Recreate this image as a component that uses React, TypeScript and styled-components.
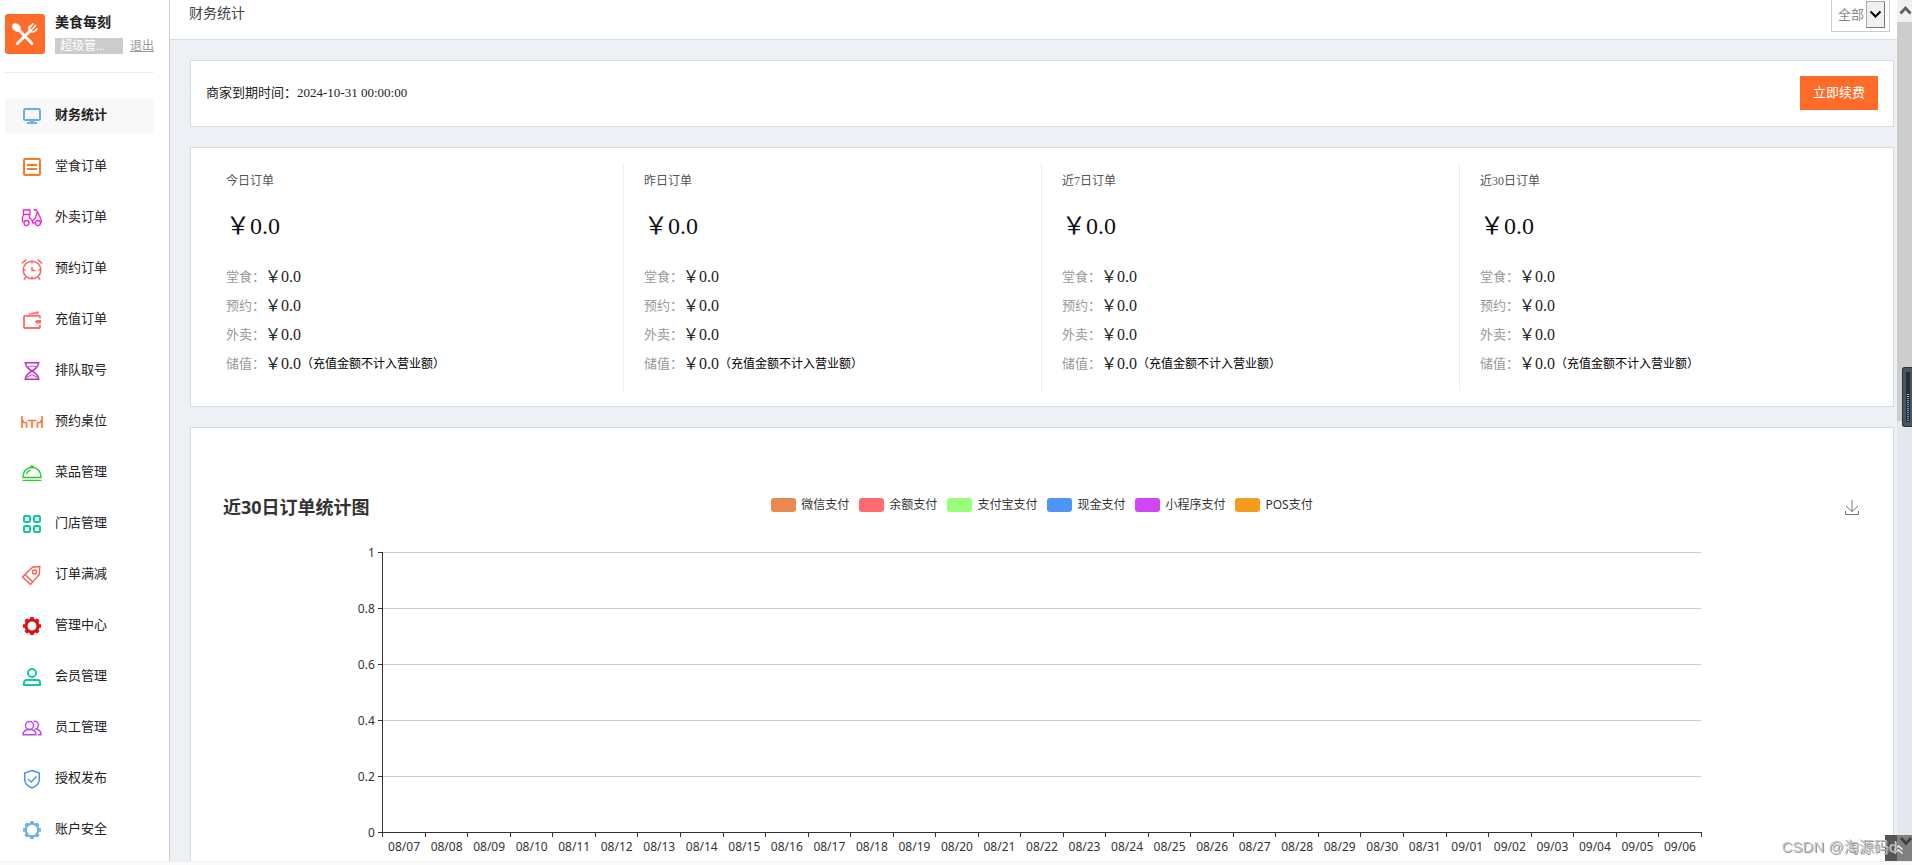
import React from "react";
import styled, { createGlobalStyle, css } from "styled-components";

const GlobalStyle = createGlobalStyle`
  *, *::before, *::after { box-sizing: border-box; }
  html, body { margin: 0; padding: 0; }
  body {
    font-family: "Liberation Serif", "Noto Sans CJK SC", serif;
    font-size: 13px;
    line-height: 20px;
    color: #222;
    overflow: hidden;
  }
  h1, h2, h3, p, ul, dl, dd, dt { margin: 0; padding: 0; font-weight: normal; }
  ul { list-style: none; }
`;

/* ---------- page frame ---------- */

const Page = styled.div`
  display: flex;
  flex-direction: column;
  height: 100vh;
  background: #fff;
`;

const Shell = styled.div`
  display: flex;
  flex: 1;
  min-height: 0;
`;

const BottomStrip = styled.div`
  height: 4px;
  background: #fafafa;
  border-top: 1px solid #eee;
`;

/* ---------- sidebar ---------- */

const Sidebar = styled.aside`
  flex: none;
  width: 170px;
  padding: 14px 15px 0 5px;
  border-right: 1px solid #ccc;
  background: #fff;
  overflow: hidden;
`;

const Brand = styled.div`
  display: flex;
  gap: 10px;
  height: 59px;
  border-bottom: 1px solid #eee;
`;

const Logo = styled.svg`
  flex: none;
  width: 40px;
  height: 40px;
`;

const BrandInfo = styled.div`
  flex: 1;
`;

const BrandName = styled.h1`
  font-size: 14px;
  line-height: 18px;
  font-weight: bold;
  height: 24px;
`;

const Account = styled.div`
  display: flex;
  justify-content: space-between;
  font-size: 12px;
  line-height: 16px;
`;

const Role = styled.span`
  width: 68px;
  height: 16px;
  padding-left: 5px;
  background: #ccc;
  color: #fff;
`;

const Logout = styled.a`
  color: #999;
  text-decoration: underline;
`;

const Menu = styled.ul`
  display: flex;
  flex-direction: column;
  gap: 15px;
  padding-top: 25px;
`;

const MenuLink = styled.a<{ $active?: boolean }>`
  display: flex;
  align-items: center;
  gap: 12px;
  height: 36px;
  padding-left: 16px;
  border-radius: 2px;
  color: #222;
  text-decoration: none;
  ${(p) => p.$active && css`
    background: #f8f8f8;
    font-weight: bold;
  `}
`;

const MenuLabel = styled.span`
  padding-bottom: 2px;
`;

const MenuIcon = styled.svg`
  flex: none;
  width: 22px;
  height: 22px;
  fill: none;
`;

/* ---------- content ---------- */

const Content = styled.div`
  flex: 1;
  min-width: 0;
  overflow: hidden;
  background: #edf1f6;
`;

const TopBar = styled.header`
  display: flex;
  justify-content: space-between;
  height: 40px;
  padding: 0 7px 0 19px;
  background: #fff;
  border-bottom: 1px solid #ddd;
`;

const PageTitle = styled.h2`
  font-size: 14px;
  line-height: 27px;
  color: #444;
`;

const StoreFilter = styled.label`
  display: flex;
  position: relative;
  align-items: flex-start;
  height: 32px;
  padding: 1px 4px 0 6px;
  border: 1px solid #ccc;
  border-top: none;
`;

const StoreSelect = styled.select`
  appearance: none;
  width: 47px;
  height: 27px;
  padding: 0;
  border: none;
  background: none;
  font-family: inherit;
  font-size: 13px;
  color: #888;
`;

const SelectArrow = styled.svg`
  position: absolute;
  top: 1px;
  right: 4px;
  width: 19px;
  height: 27px;
  background: #f0f0f0;
  border: 1px solid #777;
  border-top-color: #aaa;
  border-left-color: #aaa;
  pointer-events: none;
`;

const Cards = styled.main`
  display: flex;
  flex-direction: column;
  gap: 20px;
  padding: 20px 3px 20px 20px;
`;

const Card = styled.section`
  background: #fff;
  border: 1px solid #dadbde;
`;

const ExpiryCard = styled(Card)`
  display: flex;
  align-items: center;
  justify-content: space-between;
  height: 67px;
  padding: 0 15px 2px;
`;

const RenewButton = styled.button`
  width: 78px;
  height: 34px;
  padding: 0 0 2px;
  border: none;
  background: #ff6c2a;
  color: #fff;
  font-family: inherit;
  font-size: 13px;
`;

const StatsCard = styled(Card)`
  display: grid;
  grid-template-columns: repeat(4, 1fr);
  padding: 15px;
`;

const StatColumn = styled.div`
  height: 228px;
  padding: 8px 0 0 20px;
  border-right: 1px solid #eee;
  &:last-child { border-right: none; }
`;

const StatTitle = styled.h3`
  font-size: 12px;
  line-height: 21px;
  color: #555;
`;

const StatTotal = styled.p`
  padding: 20px 0 22px;
  font-size: 24px;
  line-height: 28px;
  color: #111;
`;

const StatRow = styled.div`
  display: flex;
  align-items: center;
  height: 29px;
`;

const StatLabel = styled.dt`
  color: #999;
`;

const StatValue = styled.dd`
  font-size: 16px;
`;

const StatNote = styled.dd`
  font-size: 12px;
  color: #000;
`;

/* ---------- chart ---------- */

const ChartCard = styled(Card)`
  padding: 62px 27px 40px;
  font-family: "Noto Sans", "Noto Sans CJK SC", sans-serif;
`;

const ChartHead = styled.div`
  display: grid;
  grid-template-columns: 1fr auto 1fr;
  align-items: center;
  height: 34px;
`;

const ChartTitle = styled.h3`
  padding-left: 5px;
  font-size: 18px;
  line-height: 34px;
  font-weight: bold;
  color: #333;
`;

const Legend = styled.ul`
  display: flex;
  gap: 10px;
  padding-bottom: 4px;
  font-size: 12px;
  line-height: 20px;
  color: #333;
`;

const LegendItem = styled.li`
  display: flex;
  align-items: center;
  gap: 5px;
`;

const Swatch = styled.span<{ $color: string }>`
  width: 25px;
  height: 14px;
  border-radius: 3px;
  background: ${(p) => p.$color};
`;

const SaveButton = styled.button`
  justify-self: end;
  display: flex;
  padding: 2px 6px 0 0;
  border: none;
  background: none;
`;

const Plot = styled.svg`
  display: block;
  width: 100%;
  height: 340px;
  font-size: 12px;
  text { fill: #333; }
  line { shape-rendering: crispEdges; }
`;

/* ---------- scroll bar and overlays ---------- */

const ScrollTrack = styled.div`
  flex: none;
  width: 15px;
  background: #e5e7ec;
`;

const ScrollArrow = styled.svg`
  display: block;
  width: 15px;
  height: 22px;
  background: #f0f0f0;
`;

const ScrollThumb = styled.div`
  height: 399px;
  background: #cdcdcd;
`;

const Meter = styled.div`
  position: fixed;
  right: 0;
  top: 367px;
  width: 10px;
  height: 60px;
  padding: 4px 3px;
  border: 1px solid #2c3238;
  border-right: none;
  border-radius: 3px 0 0 3px;
  background: #4a555e;
`;

const MeterBars = styled.svg`
  display: block;
  width: 4px;
  height: 50px;
  background: #272c38;
`;

const BackToTop = styled.button`
  position: fixed;
  right: 0;
  bottom: 4px;
  width: 27px;
  height: 26px;
  padding: 0;
  border: none;
  background: linear-gradient(to right, #555 12px, #808080 12px);
`;

const Watermark = styled.span`
  position: fixed;
  right: 15px;
  bottom: 8px;
  font-family: "Liberation Sans", "Noto Sans CJK SC", sans-serif;
  font-size: 15px;
  line-height: 20px;
  color: #c4c4c4;
  text-shadow: 1px 1px 0 #999;
`;

/* ---------- icons ---------- */

const GEAR_TEETH = [0, 45, 90, 135, 180, 225, 270, 315];

const Gear = ({ color, heavy }: { color: string; heavy?: boolean }) => (
  <MenuIcon viewBox="0 0 22 22">
    <circle cx="11" cy="11" r={heavy ? 6 : 6.3} stroke={color} strokeWidth={heavy ? 3 : 2.2} />
    {GEAR_TEETH.map((a) => (
      <rect key={a} x="9.2" y="2" width="3.6" height="3" rx=".6" fill={color} transform={`rotate(${a} 11 11)`} />
    ))}
  </MenuIcon>
);

const icons: Record<string, React.ReactNode> = {
  monitor: (
    <MenuIcon viewBox="0 0 22 22">
      <rect x="3" y="4" width="16" height="11" rx="1" stroke="#69b0ec" strokeWidth="2" />
      <path d="M9 15h4v2h3v2H6v-2h3z" fill="#69b0ec" />
    </MenuIcon>
  ),
  list: (
    <MenuIcon viewBox="0 0 22 22">
      <rect x="3" y="3" width="16" height="16" rx="1" stroke="#ff7a23" strokeWidth="2" />
      <path d="M6 9h10M6 13h10" stroke="#ff7a23" strokeWidth="2" />
    </MenuIcon>
  ),
  scooter: (
    <MenuIcon viewBox="0 0 22 22" stroke="#ee22dd" strokeWidth="1.3">
      <path d="M2.500 3h6.500v4.500H2.500zM2.500 8c-1.300 2-1.500 5-.5 7.500M8.500 8v3c2 1 3 2.500 3.300 5h2M12.500 3h2.800l1 2-1.800 6-3 3M16.500 4.500l3.500 8c.8 2 .4 3-.8 4" />
      <circle cx="5.500" cy="16" r="2.500" />
      <circle cx="17" cy="16" r="2.500" />
    </MenuIcon>
  ),
  alarm: (
    <MenuIcon viewBox="0 0 22 22" stroke="#fb6160" strokeWidth="1.500">
      <circle cx="11" cy="12" r="8.800" />
      <path d="M.800 5.500 5.500 1.500M21.200 5.500 16.500 1.500M11 9v3.500h3.500M11 3.500v2M11 18.500v2M2.500 12h2M17.500 12h2M5 19l-2 2.500M17 19l2 2.500" />
    </MenuIcon>
  ),
  wallet: (
    <MenuIcon viewBox="0 0 22 22" stroke="#ff6a6a" strokeWidth="1.800">
      <path d="M19 9.500V7.800a1 1 0 0 0-1-1H4a1 1 0 0 0-1 1V18a1 1 0 0 0 1 1h14a1 1 0 0 0 1-1v-2" />
      <path d="M6.500 5.500 17 2.500v3z" fill="#ff6a6a" fillOpacity=".5" stroke="none" />
      <path d="M8 5.200 17 3v2.500" strokeWidth="1.200" />
      <path d="M20 11h-4.500l-1.500 1.800 1.500 1.800H20z" fill="#ff6a6a" stroke="none" />
    </MenuIcon>
  ),
  hourglass: (
    <MenuIcon viewBox="0 0 22 22" stroke="#c02fc4" strokeWidth="1.500">
      <path d="M3.500 2.800h15M3.500 19.200h15M4.500 3c0 4 3 6 6.500 8 3.500-2 6.500-4 6.500-8M4.500 19c0-4 3-6 6.500-8 3.500 2 6.500 4 6.500 8" />
      <path d="M7 6.500c2 1 3-1 4.500-.5s2 .8 3.500.3M6 17.500l5-3 5 3" strokeWidth="1" />
    </MenuIcon>
  ),
  table: (
    <MenuIcon viewBox="0 0 22 22" stroke="#f87a40" strokeWidth="1.700">
      <path d="M1 5v12M1 11.500h4.500V17M21 5v12M21 11.500h-4.500V17M6.500 9.500h9M11 9.500V17" />
      <path d="M2 9v3M20 9v3" />
    </MenuIcon>
  ),
  dish: (
    <MenuIcon viewBox="0 0 22 22" stroke="#22cc22" strokeWidth="1.300">
      <path d="M2 15.500C2 9 6 5.500 11 5.500s9 3.500 9 10zM1.500 18.300h19M9.500 5.300c0-2 3-2 3 0M5.500 12c.5-2 1.800-3.500 3.800-4.200" />
    </MenuIcon>
  ),
  grid: (
    <MenuIcon viewBox="0 0 22 22" stroke="#0fc99a" strokeWidth="2">
      <rect x="3" y="3" width="6" height="6" rx="1.300" />
      <rect x="13" y="3" width="6" height="6" rx="1.300" />
      <rect x="3" y="13" width="6" height="6" rx="1.300" />
      <rect x="13" y="13" width="6" height="6" rx="1.300" />
    </MenuIcon>
  ),
  tag: (
    <MenuIcon viewBox="0 0 22 22" stroke="#fb5f4c" strokeWidth="1.400">
      <path d="M1.500 13 11.500 3.200l7.300-.7-.5 8L9.500 20.500zM4.200 10.500l7.500 7.500" />
      <circle cx="13.500" cy="8" r="2" />
    </MenuIcon>
  ),
  gearRed: <Gear color="#e60a0a" heavy />,
  member: (
    <MenuIcon viewBox="0 0 22 22" stroke="#0fcb9b" strokeWidth="2">
      <circle cx="11" cy="7" r="4" />
      <path d="M3 19v-2.500a2.500 2.500 0 0 1 2.500-2.500h11a2.500 2.500 0 0 1 2.500 2.500V19z" />
    </MenuIcon>
  ),
  staff: (
    <MenuIcon viewBox="0 0 22 22" stroke="#bf46f5" strokeWidth="1.500">
      <circle cx="8.500" cy="8.500" r="4" />
      <path d="M2 17.800c0-3.500 2.500-5.300 6.500-5.300s6.500 1.800 6.500 5.300zM12.500 4.500c4-.8 6 2.500 4.500 5.500-.4 1-1 1.500-2 2 3.500.5 5 2.500 5 5.800h-3" />
    </MenuIcon>
  ),
  shield: (
    <MenuIcon viewBox="0 0 22 22" stroke="#4490fb" strokeWidth="1.500">
      <path d="M11 2.500 18.300 5v7c0 3.500-3 6-7.300 8-4.300-2-7.300-4.500-7.300-8V5zM7 11l3.300 3 5.200-5.500" />
    </MenuIcon>
  ),
  gearBlue: <Gear color="#69b0ec" />,
};

/* ---------- data ---------- */

const menu = [
  ["monitor", "财务统计"],
  ["list", "堂食订单"],
  ["scooter", "外卖订单"],
  ["alarm", "预约订单"],
  ["wallet", "充值订单"],
  ["hourglass", "排队取号"],
  ["table", "预约桌位"],
  ["dish", "菜品管理"],
  ["grid", "门店管理"],
  ["tag", "订单满减"],
  ["gearRed", "管理中心"],
  ["member", "会员管理"],
  ["staff", "员工管理"],
  ["shield", "授权发布"],
  ["gearBlue", "账户安全"],
];

const periods = ["今日订单", "昨日订单", "近7日订单", "近30日订单"];
const channels = ["堂食", "预约", "外卖", "储值"];

const payments = [
  ["微信支付", "#eb884f"],
  ["余额支付", "#ff6b70"],
  ["支付宝支付", "#99ff7a"],
  ["现金支付", "#4f95f8"],
  ["小程序支付", "#d046f5"],
  ["POS支付", "#f49c1f"],
];

const days = Array.from({ length: 31 }, (_, i) => {
  const month = i < 25 ? 8 : 9;
  const day = i < 25 ? i + 7 : i - 24;
  return `0${month}/${String(day).padStart(2, "0")}`;
});

const yTicks = ["1", "0.8", "0.6", "0.4", "0.2", "0"];
const TOP = 28;
const STEP = 56;
const BASE = TOP + STEP * 5;

const OrderChart = () => (
  <Plot role="img" aria-label="近30日订单统计图">
    <svg x="10%" width="80%" height="340" overflow="visible">
      {yTicks.map((label, i) => {
        const y = TOP + i * STEP;
        return (
          <g key={label}>
            <line x1="0" x2="100%" y1={y} y2={y} stroke={i === 5 ? "#333" : "#ccc"} />
            <line x1="-5" x2="0" y1={y} y2={y} stroke="#333" />
            <text x="-8" y={y + 5} textAnchor="end">{label}</text>
          </g>
        );
      })}
      <line x1="0" x2="0" y1={TOP} y2={BASE} stroke="#333" />
      {Array.from({ length: days.length + 1 }, (_, i) => {
        const x = `${(i / days.length) * 100}%`;
        return <line key={i} x1={x} x2={x} y1={BASE} y2={BASE + 5} stroke="#333" />;
      })}
      {days.map((d, i) => (
        <text key={d} x={`${((i + 0.5) / days.length) * 100}%`} y={BASE + 19} textAnchor="middle">{d}</text>
      ))}
    </svg>
  </Plot>
);

export default function App() {
  return (
    <Page>
      <GlobalStyle />
      <Shell>
        <Sidebar>
          <Brand>
            <Logo viewBox="0 0 40 40">
              <rect width="40" height="40" rx="3" fill="#ff6c2a" />
              <g stroke="#fff" fill="none" strokeLinecap="round">
                <path d="M13 15 27 29.500" strokeWidth="3" />
                <path d="M12.500 29.500 26 16" strokeWidth="3" />
                <path d="M24.500 12.500c-1.500 3 0 5.500 3 5.500 1.800 0 3-1 4.500-3M25 13l3-3.200M28 14.500l2.500-3" strokeWidth="1.700" />
              </g>
              <ellipse cx="11.500" cy="13.500" rx="5" ry="3.600" transform="rotate(42 11.500 13.500)" fill="#fff" />
            </Logo>
            <BrandInfo>
              <BrandName>美食每刻</BrandName>
              <Account>
                <Role>超级管...</Role>
                <Logout href="#logout">退出</Logout>
              </Account>
            </BrandInfo>
          </Brand>
          <nav>
            <Menu>
              {menu.map(([icon, label], i) => (
                <li key={label}>
                  <MenuLink href={`#${icon}`} $active={i === 0}>
                    {icons[icon]}
                    <MenuLabel>{label}</MenuLabel>
                  </MenuLink>
                </li>
              ))}
            </Menu>
          </nav>
        </Sidebar>

        <Content>
          <TopBar>
            <PageTitle>财务统计</PageTitle>
            <StoreFilter>
              <StoreSelect aria-label="门店" defaultValue="all">
                <option value="all">全部</option>
              </StoreSelect>
              <SelectArrow viewBox="0 0 17 25">
                <path d="m3.500 9.500 5 5 5-5" fill="none" stroke="#000" strokeWidth="2" />
              </SelectArrow>
            </StoreFilter>
          </TopBar>

          <Cards>
            <ExpiryCard>
              <p>商家到期时间：2024-10-31 00:00:00</p>
              <RenewButton type="button">立即续费</RenewButton>
            </ExpiryCard>

            <StatsCard>
              {periods.map((title) => (
                <StatColumn key={title}>
                  <StatTitle>{title}</StatTitle>
                  <StatTotal>￥0.0</StatTotal>
                  <dl>
                    {channels.map((name) => (
                      <StatRow key={name}>
                        <StatLabel>{name}：</StatLabel>
                        <StatValue>￥0.0</StatValue>
                        {name === "储值" && <StatNote>（充值金额不计入营业额）</StatNote>}
                      </StatRow>
                    ))}
                  </dl>
                </StatColumn>
              ))}
            </StatsCard>

            <ChartCard>
              <ChartHead>
                <ChartTitle>近30日订单统计图</ChartTitle>
                <Legend>
                  {payments.map(([name, color]) => (
                    <LegendItem key={name}>
                      <Swatch $color={color} />
                      {name}
                    </LegendItem>
                  ))}
                </Legend>
                <SaveButton type="button" aria-label="保存为图片">
                  <svg width="16" height="16" viewBox="0 0 16 16" fill="none" stroke="#777">
                    <path d="M8 0v11.500M2 6l6 5.500L14 6M1.500 11v3.500h13V11" />
                  </svg>
                </SaveButton>
              </ChartHead>
              <OrderChart />
            </ChartCard>
          </Cards>
        </Content>

        <ScrollTrack aria-hidden="true">
          <ScrollArrow viewBox="0 0 15 22">
            <path d="m3.500 13.500 5-5.500 5 5.500" fill="none" stroke="#606060" strokeWidth="2.800" />
          </ScrollArrow>
          <ScrollThumb />
        </ScrollTrack>
      </Shell>
      <BottomStrip />

      <Meter aria-hidden="true">
        <MeterBars viewBox="0 0 4 50">
          {Array.from({ length: 14 }, (_, i) => (
            <rect key={i} x="1" y={22 + i * 2} width="2" height="1" fill={i < 2 ? "#8fd08a" : "#45b0e0"} />
          ))}
        </MeterBars>
      </Meter>
      <BackToTop type="button" aria-label="返回顶部">
        <svg width="27" height="26" viewBox="0 0 27 26" fill="none">
          <path d="m16 3 5 5.500L26 3" stroke="#404040" strokeWidth="2.800" />
          <path d="m9.500 14.500 4-3.500 4 3.500M9.500 18.500l4-3.500 4 3.500" stroke="#e8f0ff" strokeWidth="1.500" />
        </svg>
      </BackToTop>
      <Watermark>CSDN @淘源码d</Watermark>
    </Page>
  );
}
